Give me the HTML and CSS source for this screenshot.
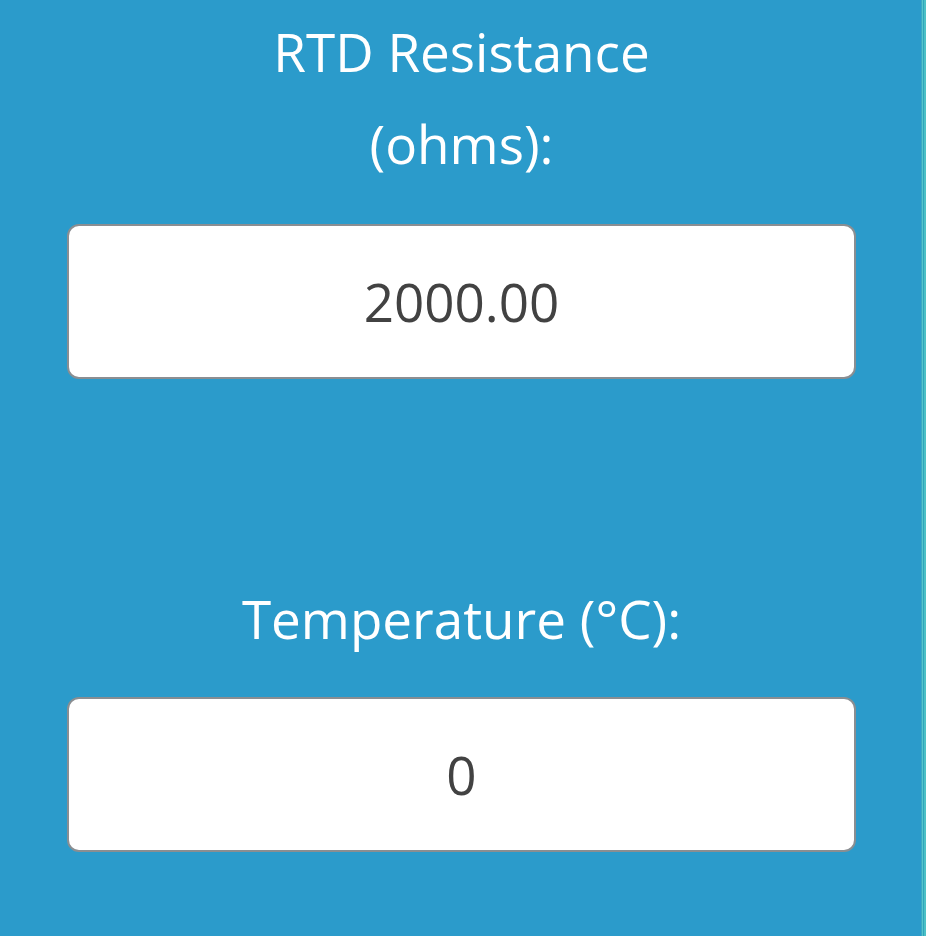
FILE: index.html
```html
<!DOCTYPE html>
<html>
<head>
<meta charset="utf-8">
<link rel="stylesheet" href="styles.css">
</head>
<body>
<div class="page">
  <main class="content">
    <div class="field first">
      <label class="label" for="res">RTD Resistance (ohms):</label>
      <input class="box" id="res" type="text" value="2000.00">
    </div>
    <div class="field second">
      <label class="label" for="temp">Temperature (°C):</label>
      <input class="box" id="temp" type="text" value="0">
    </div>
  </main>
  <div class="edge"></div>
</div>
</body>
</html>
```
FILE: styles.css
```css
html, body {
  margin: 0;
  padding: 0;
  height: 100%;
}
body {
  background: #2b9bcb;
  font-family: "Open Sans", "Liberation Sans", sans-serif;
  overflow: hidden;
}
.page {
  display: flex;
  height: 100%;
}
.content {
  flex: 1;
  display: flex;
  flex-direction: column;
  padding: 6px 65px 0 67px;
}
.edge {
  width: 5px;
  background: linear-gradient(to right, #3aa9c4 0, #3aa9c4 1px, #58c4cc 1px, #58c4cc 2px, #2fa6bb 2px, #2fa6bb 3px, #4cc0c6 3px, #4cc0c6 5px);
}
.field {
  display: flex;
  flex-direction: column;
  align-items: center;
}
.first .box {
  margin-top: 34px;
}
.second {
  margin-top: 194px;
}
.second .box {
  margin-top: 32px;
}
.label {
  color: #ffffff;
  font-size: 53px;
  line-height: 92px;
  text-align: center;
  max-width: 520px;
}
.box {
  box-sizing: border-box;
  width: 100%;
  height: 155px;
  border: 2px solid #8a8e92;
  border-radius: 12px;
  background: #ffffff;
  color: #424242;
  font-family: "Open Sans", "Liberation Sans", sans-serif;
  font-size: 53px;
  text-align: center;
  padding: 0;
  outline: none;
}
```
